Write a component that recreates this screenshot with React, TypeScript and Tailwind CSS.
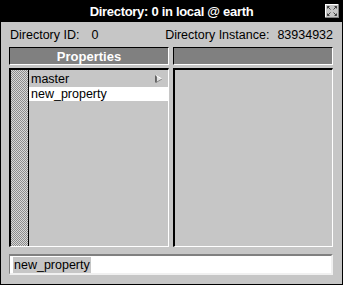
import React from 'react';

const FONT = "font-['Liberation_Sans',Arial,sans-serif]";

function CloseIcon() {
  return (
    <svg width="14" height="14" viewBox="0 0 14 14">
      <rect x="0" y="0" width="14" height="14" fill="#c6c6c6" />
      <path d="M0 0.5H14M0.5 0V14" stroke="#fff" strokeWidth="1" />
      <path d="M14 13.5H0M13.5 14V0" stroke="#808080" strokeWidth="1" />
      <g stroke="#404040" strokeWidth="1">
        <path d="M2.5 2.5L5.5 5.5M2.5 2.5H4.5M2.5 2.5V4.5" />
        <path d="M11.5 2.5L8.5 5.5M11.5 2.5H9.5M11.5 2.5V4.5" />
        <path d="M2.5 11.5L5.5 8.5M2.5 11.5H4.5M2.5 11.5V9.5" />
        <path d="M11.5 11.5L8.5 8.5M11.5 11.5H9.5M11.5 11.5V9.5" />
      </g>
    </svg>
  );
}

function Arrow() {
  return (
    <svg width="8" height="8" viewBox="0 0 8 8">
      <path d="M1 0.5L7 4L1 7.5Z" fill="#e0e0e0" />
      <path d="M1 0.5V7.5" stroke="#222" strokeWidth="1.2" />
      <path d="M1 0.5L7 4" stroke="#fff" strokeWidth="1" />
      <path d="M7 4L1 7.5" stroke="#888" strokeWidth="1" />
    </svg>
  );
}

export default function App() {
  return (
    <div className={`${FONT} w-[343px] h-[285px] flex flex-col bg-[#c6c6c6] border border-black text-black`}>
      {/* title bar */}
      <div className="relative h-[21px] shrink-0 bg-black flex items-center justify-center">
        <span className="text-white font-bold text-[13px] leading-none tracking-[-0.3px]">
          Directory: 0 in local @ earth
        </span>
        <div className="absolute right-[3px] top-[3px]">
          <CloseIcon />
        </div>
      </div>

      <div className="flex-1 flex flex-col pl-[8px] pr-[9px] pt-[4px]">
        {/* info row */}
        <div className="flex justify-between items-end h-[15px] text-[12.5px] leading-none pl-[1px]">
          <span>
            Directory ID:<span className="ml-[12px]">0</span>
          </span>
          <span>
            Directory Instance:<span className="ml-[8px]">83934932</span>
          </span>
        </div>

        {/* headers */}
        <div className="mt-[6px] grid grid-cols-2 gap-[4px] h-[18px]">
          <div className="bg-[#808080] border-t border-l border-black border-r border-b border-r-white border-b-white flex items-center justify-center text-white font-bold text-[13px] leading-none">
            Properties
          </div>
          <div className="bg-[#808080] border-t border-l border-black border-r border-b border-r-white border-b-white" />
        </div>

        {/* panels */}
        <div className="mt-[3px] grid grid-cols-2 gap-[4px] h-[179px]">
          <div className="flex border-t-2 border-l-2 border-black border-r border-b border-r-white border-b-white">
            <div className="w-[18px] bg-[repeating-conic-gradient(#8c8c8c_0%_25%,#d8d8d8_0%_50%)] bg-[length:2px_2px] border-r border-black" />
            <div className="flex-1 pt-[1px] text-[12.5px] leading-[14px]">
              <div className="flex items-center justify-between pl-[2px] pr-[5px] h-[16px]">
                <span>master</span>
                <Arrow />
              </div>
              <div className="bg-white pl-[2px] h-[14px]">new_property</div>
            </div>
          </div>
          <div className="border-t-2 border-l-2 border-black border-r border-b border-r-white border-b-white" />
        </div>

        {/* text field */}
        <div className="mt-[7px] h-[21px] bg-white border-t-2 border-l border-[#808080] border-b-2 border-r-2 border-b-[#f0f0f0] border-r-[#f0f0f0] flex items-center pl-[3px]">
          <span className="bg-[#c6c6c6] text-[12.5px] leading-[16px] px-[1px]">new_property</span>
        </div>
      </div>
    </div>
  );
}
